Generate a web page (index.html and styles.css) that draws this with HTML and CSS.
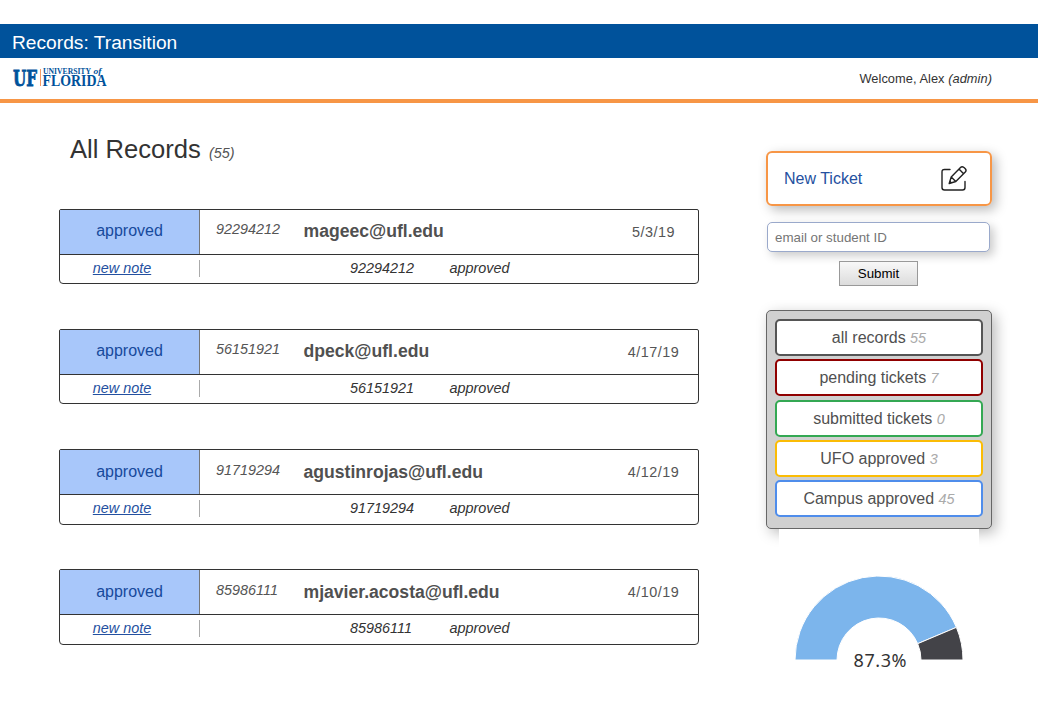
FILE: index.html
```
<!DOCTYPE html>
<html lang="en">
<head>
<meta charset="utf-8">
<title>Records: Transition</title>
<link rel="stylesheet" href="styles.css">
</head>
<body>
<header>
  <div class="app-bar">Records: Transition</div>
  <div class="brand-bar">
    <svg class="logo" width="100" height="26" viewBox="0 0 100 26" role="img" aria-label="University of Florida">
      <g class="logo-text">
        <text class="logo-uf" x="1" y="18.500" textLength="24" lengthAdjust="spacingAndGlyphs">UF</text>
        <text class="logo-univ" x="31" y="7" textLength="48" lengthAdjust="spacingAndGlyphs">UNIVERSITY</text>
        <text class="logo-of" x="81.500" y="7" textLength="8" lengthAdjust="spacingAndGlyphs">of</text>
        <text class="logo-florida" x="30.500" y="19" textLength="64" lengthAdjust="spacingAndGlyphs">FLORIDA</text>
      </g>
      <rect class="logo-rule" x="28" y="2" width="1" height="17"/>
    </svg>
    <div class="welcome">Welcome, Alex <i>(admin)</i></div>
  </div>
</header>
<main class="page">
  <section class="records">
    <h1 class="title">All Records <i class="title-count">(55)</i></h1>
    <div class="record-list">
      <article class="record">
        <div class="record-main"><a class="status">approved</a><i class="record-id">92294212</i><b class="email">mageec@ufl.edu</b><span class="date">5/3/19</span></div>
        <div class="record-note"><span class="note-cell"><a class="note-link">new note</a></span><span class="note-id">92294212</span><span class="note-status">approved</span></div>
      </article>
      <article class="record">
        <div class="record-main"><a class="status">approved</a><i class="record-id">56151921</i><b class="email">dpeck@ufl.edu</b><span class="date">4/17/19</span></div>
        <div class="record-note"><span class="note-cell"><a class="note-link">new note</a></span><span class="note-id">56151921</span><span class="note-status">approved</span></div>
      </article>
      <article class="record">
        <div class="record-main"><a class="status">approved</a><i class="record-id">91719294</i><b class="email">agustinrojas@ufl.edu</b><span class="date">4/12/19</span></div>
        <div class="record-note"><span class="note-cell"><a class="note-link">new note</a></span><span class="note-id">91719294</span><span class="note-status">approved</span></div>
      </article>
      <article class="record">
        <div class="record-main"><a class="status">approved</a><i class="record-id">85986111</i><b class="email">mjavier.acosta@ufl.edu</b><span class="date">4/10/19</span></div>
        <div class="record-note"><span class="note-cell"><a class="note-link">new note</a></span><span class="note-id">85986111</span><span class="note-status">approved</span></div>
      </article>
    </div>
  </section>
  <aside class="sidebar">
    <a class="new-ticket">New Ticket
      <svg class="edit-icon" width="28" height="28" viewBox="0 0 28 28" aria-hidden="true">
        <path d="M10 4.500H4.500Q2 4.500 2 7V22.500Q2 25 4.500 25H22.500Q25 25 25 22.500V16.500"/>
        <path d="M9.200 18.500 11.200 12 20.500 2.500Q22 1 24 2.500L25.300 3.800Q26.800 5.500 25.300 7L15.800 16.500ZM11.200 12 15.800 16.500M19 4.100 23.600 8.700"/>
        <path class="edit-tip" d="M9 18.800 10 15.500 12.300 17.800Z"/>
      </svg>
    </a>
    <form class="search">
      <input class="search-field" type="text" placeholder="email or student ID">
      <button class="submit" type="button">Submit</button>
    </form>
    <nav class="filters">
      <a class="filter filter-all">all records <i>55</i></a>
      <a class="filter filter-pending">pending tickets <i>7</i></a>
      <a class="filter filter-submitted">submitted tickets <i>0</i></a>
      <a class="filter filter-ufo">UFO approved <i>3</i></a>
      <a class="filter filter-campus">Campus approved <i>45</i></a>
    </nav>
    <svg class="chart" width="200" height="170" viewBox="0 0 200 170" role="img" aria-label="87.3%">
      <path class="chart-done" d="M16 131A84 84 0 0 1 177.400 98.360L138.700 114.680A42 42 0 0 0 58 131Z"/>
      <path class="chart-rest" d="M177.400 98.360A84 84 0 0 1 184 131H142A42 42 0 0 0 138.700 114.680Z"/>
      <text class="chart-label" x="74.500" y="138" textLength="53">87.3%</text>
    </svg>
  </aside>
</main>
</body>
</html>
```
FILE: styles.css
```
* { box-sizing: border-box; }
body {
  margin: 0;
  padding-top: 24px;
  background: #fff;
  color: #333;
  font: 16px/18px "Liberation Sans", Arial, sans-serif;
  overflow: hidden;
}
.app-bar {
  height: 34px;
  padding-left: 12px;
  background: #00529b;
  color: #fff;
  font-size: 19.2px;
  line-height: 37px;
}
.brand-bar {
  display: flex;
  justify-content: space-between;
  height: 45px;
  padding: 9px 46px 0 12px;
  border-bottom: 4px solid #f79646;
}
.logo { overflow: visible; }
.logo-text { fill: #00529b; font-family: "Liberation Serif", serif; font-weight: bold; }
.logo-uf { font-family: "DejaVu Serif", serif; font-size: 22px; stroke: #00529b; stroke-width: .8px; }
.logo-univ { font-size: 7.5px; }
.logo-of { font-size: 9px; font-style: italic; }
.logo-florida { font-size: 17px; }
.logo-rule { fill: #f79a62; }
.welcome { font-size: 12.8px; line-height: 23px; letter-spacing: .06px; }
.page {
  display: grid;
  grid-template-columns: 640px 226px;
  column-gap: 67px;
  padding-left: 59px;
}
.title { margin: 31px 0 0 11px; height: 75px; font-size: 25.6px; font-weight: normal; line-height: 30px; }
.title-count { margin-left: 1px; font-size: 14.4px; color: #555; }
.record-list { display: flex; flex-direction: column; gap: 45px; }
.record { height: 75px; border: 1px solid #333; border-radius: 2px 2px 4px 4px; }
.record:nth-child(n+3) { height: 76px; }
.record:nth-child(n+3) + .record { margin-top: -1px; }
.record-main {
  display: grid;
  grid-template-columns: 140px 103.5px 1fr 89px;
  grid-template-rows: 44px;
  height: 45px;
  border-bottom: 1px solid #333;
  line-height: 43px;
}
.status { background: #a8c7fa; border-right: 1px solid #777; color: #174a9c; text-align: center; line-height: 42px; }
.record-id { padding-left: 16px; color: #555; font-size: 14.4px; line-height: 39px; }
.email { color: #505050; font-size: 17.6px; }
.date { color: #555; font-size: 14.4px; letter-spacing: .5px; line-height: 45px; text-align: center; }
.record:nth-child(n+3) .status { line-height: 44px; }
.record:nth-child(n+3) .record-id { line-height: 41px; }
.record:nth-child(n+3) .email { line-height: 45px; }
.record-note {
  display: grid;
  grid-template-columns: 140px 249.5px 1fr;
  grid-template-rows: 17px;
  height: 28px;
  padding-top: 5px;
  color: #333;
  font-size: 14.4px;
  font-style: italic;
  line-height: 17px;
}
.note-cell { border-right: 1px solid #aaa; padding-right: 15px; text-align: center; }
.note-link { color: #2450a0; text-decoration: underline; }
.note-id { padding-left: 150px; }
.sidebar { display: flex; flex-direction: column; padding-top: 48px; }
.new-ticket {
  display: flex;
  align-items: center;
  justify-content: space-between;
  height: 55px;
  padding: 0 22px 0 16px;
  border: 2px solid #f79646;
  border-radius: 6px;
  box-shadow: 4px 4px 12px #bbb;
  color: #2450a0;
}
.edit-icon { fill: none; stroke: #222; stroke-width: 1.4; stroke-linecap: round; stroke-linejoin: round; }
.edit-tip { fill: #222; stroke: none; }
.search { display: flex; flex-direction: column; align-items: center; gap: 9px; margin-top: 16px; }
.search-field {
  width: 223px;
  height: 30px;
  margin: 0 1px 0 0;
  padding: 0 7px;
  border: 1px solid #9aa9cb;
  border-radius: 5px;
  box-shadow: 4px 4px 10px #ccc;
  font: 13.333px "Liberation Sans", Arial, sans-serif;
}
.search-field::placeholder { color: #757575; }
.submit {
  width: 79px;
  height: 25px;
  margin-right: 1px;
  padding: 0;
  border: 1px solid #999;
  border-radius: 0;
  background: linear-gradient(#f8f8f8, #dcdcdc);
  color: #000;
  font: 13.333px "Liberation Sans", Arial, sans-serif;
}
.filters {
  display: flex;
  flex-direction: column;
  gap: 3.3px;
  height: 219px;
  margin-top: 24px;
  padding: 8px;
  border: 1px solid #666;
  border-radius: 5px;
  background: #d0d0d0;
  box-shadow: 4px 4px 14px #bbb;
}
.filter {
  height: 37px;
  border: 2px solid;
  border-radius: 5px;
  background: #fff;
  color: #505050;
  line-height: 33px;
  text-align: center;
}
.filter i { color: #aaa; font-size: 14.4px; }
.filter-all { border-color: #555; }
.filter-pending { border-color: #900000; }
.filter-submitted { border-color: #34a853; }
.filter-ufo { border-color: #fbbc05; }
.filter-campus { border-color: #4f8deb; }
.chart { margin-left: 13px; background: #fff; }
.chart-done { fill: #7cb5ec; }
.chart-rest { fill: #434348; }
.chart-done, .chart-rest { stroke: #fff; stroke-width: 1px; }
.chart-label { fill: #333; font-family: "Noto Sans", sans-serif; font-size: 18px; }
```
